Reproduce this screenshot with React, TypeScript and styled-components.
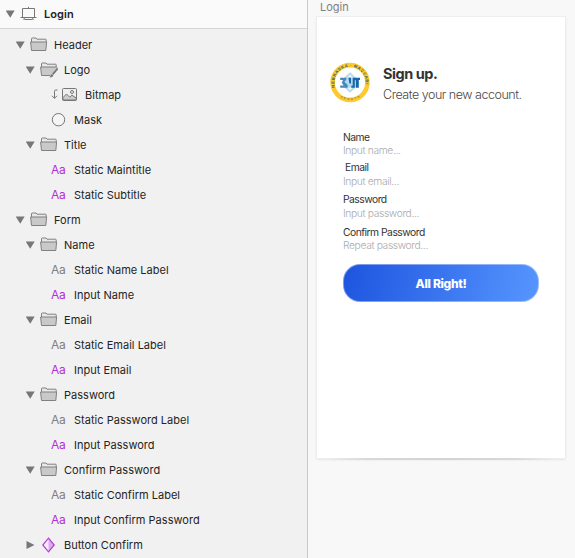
import React from 'react';
import styled, { createGlobalStyle } from 'styled-components';

const GlobalStyle = createGlobalStyle`
  * { box-sizing: border-box; }
  body { margin: 0; background: #f8f8f8; font-family: Inter, "Liberation Sans", sans-serif; }
`;

const Window = styled.main`
  display: grid;
  grid-template-columns: 308px 1fr;
  width: 575px;
  height: 558px;
  overflow: hidden;
`;

const Sidebar = styled.aside`
  background: #f1f1f1;
  border-right: 1px solid #c9c9c9;
  color: #242424;
  overflow: hidden;
`;

const SidebarHeader = styled.header`
  display: flex;
  align-items: center;
  height: 29px;
  padding-left: 6px;
  background: #fafafa;
  border-bottom: 1px solid #d5d5d5;
  font-size: 11px;
  font-weight: 600;
  letter-spacing: 0.1px;
`;

const Tree = styled.ul`
  margin: 0;
  padding: 3px 0 0;
  list-style: none;
`;

const Row = styled.li<{ $depth: number }>`
  display: flex;
  align-items: center;
  height: 25px;
  padding-left: ${(p) => 6 + p.$depth * 10}px;
  font-size: 11px;
  white-space: nowrap;
`;

const ToggleSlot = styled.span`
  display: flex;
  flex: 0 0 14px;
`;

const IconSlot = styled.span<{ $wide?: boolean }>`
  display: flex;
  align-items: center;
  flex: 0 0 ${(p) => (p.$wide ? 35 : 24)}px;
`;

const RowName = styled.span`
  letter-spacing: 0.02px;
`;

const TypeGlyph = styled.span<{ $accent: boolean }>`
  padding-left: 1px;
  font-size: 12px;
  line-height: 14px;
  font-weight: 400;
  letter-spacing: -0.3px;
  color: ${(p) => (p.$accent ? '#b42fd8' : '#808080')};
`;

const Canvas = styled.section`
  display: flex;
  flex-direction: column;
  align-items: flex-start;
  padding-left: 9px;
  background: #f8f8f8;
`;

const ArtboardLabel = styled.div`
  height: 17px;
  padding-left: 3px;
  font-size: 11px;
  line-height: 15px;
  letter-spacing: 0;
  color: #808080;
`;

const Artboard = styled.div`
  position: relative;
  width: 248px;
  height: 441px;
  padding: 45px 26px 0 13px;
  background: #fff;
  box-shadow: 0 0 0 1px #eee, 0 1px 3px rgba(0, 0, 0, 0.14);
`;

const BottomShade = styled.span`
  position: absolute;
  left: 10px;
  right: 10px;
  bottom: -2px;
  height: 2px;
  background: linear-gradient(90deg, transparent, #d8d8d8 18%, #d3d3d3 50%, #d8d8d8 82%, transparent);
`;

const Masthead = styled.div`
  display: flex;
  height: 69px;
`;

const Titles = styled.div`
  padding-left: 13px;
  white-space: nowrap;
`;

const MainTitle = styled.h1`
  margin: 2px 0 0;
  font-size: 14.5px;
  line-height: 20px;
  font-weight: 700;
  letter-spacing: -0.45px;
  color: #333;
`;

const Subtitle = styled.p`
  margin: 0;
  font-size: 12.5px;
  line-height: 22px;
  font-weight: 300;
  letter-spacing: -0.47px;
  color: #484848;
`;

const Form = styled.form`
  padding-left: 13px;
`;

const Field = styled.div<{ $height: number }>`
  height: ${(p) => p.$height}px;
  white-space: nowrap;
`;

const FieldLabel = styled.div<{ $inset?: number; $height?: number }>`
  padding-left: ${(p) => p.$inset ?? 0}px;
  height: ${(p) => p.$height ?? 13}px;
  font-size: 10.3px;
  line-height: 13px;
  letter-spacing: -0.5px;
  color: #333;
`;

const FieldHint = styled.div`
  font-size: 10.3px;
  line-height: 13px;
  font-weight: 300;
  letter-spacing: -0.37px;
  color: #aaa;
`;

const ConfirmButton = styled.button`
  display: block;
  width: 196px;
  height: 38px;
  padding: 1px 0 0;
  border: 1px solid rgba(255, 255, 255, 0.4);
  border-radius: 17px;
  background: linear-gradient(105deg, #1d54df, #5796ff) border-box;
  font-family: inherit;
  font-size: 12px;
  font-weight: 800;
  letter-spacing: -0.32px;
  color: #fff;
`;

const Triangle = ({ closed }: { closed?: boolean }) => (
  <svg width="10" height="10" viewBox="0 0 10 10">
    <path d={closed ? 'M.5 1v8L8.5 5z' : 'M-.3 1.4h9L4.2 8.8z'} fill="#777" />
  </svg>
);

const FolderIcon = ({ pen }: { pen?: boolean }) => (
  <svg width="19" height="19" viewBox="0 0 19 19">
    <path d="M1.5 7V3.7q0-.7.7-.7H6l1 1.2h8.5q.7 0 .7.7V7" fill="#e8e8e8" stroke="#808080" />
    <path d="M.6 7h16l-.8 8.5H1.5z" fill="#c9c9c9" stroke="#808080" strokeLinejoin="round" />
    {pen && (
      <>
        <path d="M19 4.5 8.5 18H19z" fill="#f1f1f1" />
        <path d="m17.4 7.3-5.3 6.1 1.3 1.6 4.6-5.4zM12 13.9c-1.4.2-1.1 2.7-2.7 3.4 2 .4 4-.3 3.9-2z" fill="#777" />
      </>
    )}
  </svg>
);

const ArtboardIcon = () => (
  <svg width="18" height="16" viewBox="0 0 18 16" fill="none" stroke="#777">
    <path d="M2.5 2.5h12v9h-12zM.5 11.5h16M8.5 .8v1.7M4.5 11.5 3.8 14M12.5 11.5l.7 2.5M4.5 13.5h8" />
  </svg>
);

const BitmapIcon = () => (
  <svg width="28" height="16" viewBox="0 0 28 16" fill="none" stroke="#777">
    <path d="M7.6 3H5.7q-1.2 0-1.2 1.2v7.1M2 8.8l2.5 2.5L7 8.8" />
    <rect x="12.5" y="1.5" width="14" height="12" rx="1" fill="#eee" />
    <path d="m13 10.5 3.5-3.5 3.2 3.2 2.2-2 4.3 2.8v2H13z" fill="#ccc" />
    <circle cx="22" cy="5" r="1.5" />
  </svg>
);

const MaskIcon = () => (
  <svg width="17" height="16" viewBox="0 0 17 16">
    <circle cx="8.5" cy="7.7" r="6.2" fill="#f5f5f5" stroke="#777" />
  </svg>
);

const SymbolIcon = () => (
  <svg width="18" height="16" viewBox="0 0 18 16">
    <path d="M8.5 1.2 14.2 8l-5.7 6.8L2.8 8z" fill="#faf0fd" />
    <path d="M8.5 1.2 14.2 8l-5.7 6.8z" fill="#ddaaea" />
    <path d="M8.5 1.2 14.2 8l-5.7 6.8L2.8 8z" fill="none" stroke="#b53bd8" strokeWidth="1.2" />
  </svg>
);

const ClubLogo = () => (
  <svg width="40" height="41" viewBox="0 0 40 41">
    <defs>
      <path id="ring-top" d="M5.2 26.2A15.8 15.8 0 1 1 34.8 26.2" />
      <path id="ring-bottom" d="M8 33.5A17.7 17.7 0 0 0 32 33.5" />
    </defs>
    <circle cx="20" cy="20.5" r="17.4" fill="#fff" stroke="#fdc92f" strokeWidth="4.6" />
    <text fill="#295d79" fontFamily="Liberation Sans, sans-serif" fontSize="4.1" fontWeight="700" letterSpacing="0.55">
      <textPath href="#ring-top" startOffset="1">NEBRASKA · MACCABI</textPath>
    </text>
    <text fill="#7f8050" fontFamily="Liberation Sans, sans-serif" fontSize="3" fontWeight="700" letterSpacing="1.6">
      <textPath href="#ring-bottom" startOffset="3">SPORTS</textPath>
    </text>
    <path d="M20 10.2 25.5 15.2 27.5 20.5 25.5 25.8 20 30.8 14.5 25.8 12.5 20.5 14.5 15.2z" fill="#b9d9ed" />
    <path d="m20 12.6 3.1 3h-6.2zM20 28.4l3.1-3h-6.2z" fill="#e7f3f9" />
    <path d="M10.2 15.7h6.1v2.1l-1.9 1.9 3.3 3.2v2.8h-7.5v-2.3h3.6l-2.1-2.7 1.3-2.7h-2.8z" fill="#4589bd" />
    <path d="M18.4 15.7H21v5.8h-1.6zM22.7 15.7h7.3v2.2l-1.2.2v7.6h-2.9v-7.5h-1.1v7.5h-3.5v-2h1.4z" fill="#1768aa" />
  </svg>
);

type Kind = 'folder' | 'maskedFolder' | 'bitmap' | 'mask' | 'label' | 'input' | 'symbol';

const layers: { name: string; depth: number; kind: Kind }[] = [
  { name: 'Header', depth: 1, kind: 'folder' },
  { name: 'Logo', depth: 2, kind: 'maskedFolder' },
  { name: 'Bitmap', depth: 3, kind: 'bitmap' },
  { name: 'Mask', depth: 3, kind: 'mask' },
  { name: 'Title', depth: 2, kind: 'folder' },
  { name: 'Static Maintitle', depth: 3, kind: 'input' },
  { name: 'Static Subtitle', depth: 3, kind: 'input' },
  { name: 'Form', depth: 1, kind: 'folder' },
  { name: 'Name', depth: 2, kind: 'folder' },
  { name: 'Static Name Label', depth: 3, kind: 'label' },
  { name: 'Input Name', depth: 3, kind: 'input' },
  { name: 'Email', depth: 2, kind: 'folder' },
  { name: 'Static Email Label', depth: 3, kind: 'label' },
  { name: 'Input Email', depth: 3, kind: 'input' },
  { name: 'Password', depth: 2, kind: 'folder' },
  { name: 'Static Password Label', depth: 3, kind: 'label' },
  { name: 'Input Password', depth: 3, kind: 'input' },
  { name: 'Confirm Password', depth: 2, kind: 'folder' },
  { name: 'Static Confirm Label', depth: 3, kind: 'label' },
  { name: 'Input Confirm Password', depth: 3, kind: 'input' },
  { name: 'Button Confirm', depth: 2, kind: 'symbol' },
];

const LayerIcon = ({ kind }: { kind: Kind }) => {
  switch (kind) {
    case 'folder': return <FolderIcon />;
    case 'maskedFolder': return <FolderIcon pen />;
    case 'bitmap': return <BitmapIcon />;
    case 'mask': return <MaskIcon />;
    case 'symbol': return <SymbolIcon />;
    default: return <TypeGlyph $accent={kind === 'input'}>Aa</TypeGlyph>;
  }
};

const fields = [
  { label: 'Name', hint: 'Input name...', height: 30 },
  { label: 'Email', hint: 'Input email...', height: 32, inset: 2, labelHeight: 14 },
  { label: 'Password', hint: 'Input password...', height: 33, labelHeight: 14 },
  { label: 'Confirm Password', hint: 'Repeat password...', height: 38 },
];

export default function App() {
  return (
    <>
      <GlobalStyle />
      <Window>
        <Sidebar>
          <SidebarHeader>
            <ToggleSlot><Triangle /></ToggleSlot>
            <IconSlot><ArtboardIcon /></IconSlot>
            Login
          </SidebarHeader>
          <Tree>
            {layers.map((layer) => (
              <Row key={layer.name} $depth={layer.depth}>
                <ToggleSlot>
                  {(layer.kind === 'folder' || layer.kind === 'maskedFolder' || layer.kind === 'symbol') && (
                    <Triangle closed={layer.kind === 'symbol'} />
                  )}
                </ToggleSlot>
                <IconSlot $wide={layer.kind === 'bitmap'}><LayerIcon kind={layer.kind} /></IconSlot>
                <RowName>{layer.name}</RowName>
              </Row>
            ))}
          </Tree>
        </Sidebar>
        <Canvas>
          <ArtboardLabel>Login</ArtboardLabel>
          <Artboard>
            <Masthead>
              <ClubLogo />
              <Titles>
                <MainTitle>Sign up.</MainTitle>
                <Subtitle>Create your new account.</Subtitle>
              </Titles>
            </Masthead>
            <Form>
              {fields.map((f) => (
                <Field key={f.label} $height={f.height}>
                  <FieldLabel $inset={f.inset} $height={f.labelHeight}>{f.label}</FieldLabel>
                  <FieldHint>{f.hint}</FieldHint>
                </Field>
              ))}
              <ConfirmButton type="button">All Right!</ConfirmButton>
            </Form>
            <BottomShade />
          </Artboard>
        </Canvas>
      </Window>
    </>
  );
}
